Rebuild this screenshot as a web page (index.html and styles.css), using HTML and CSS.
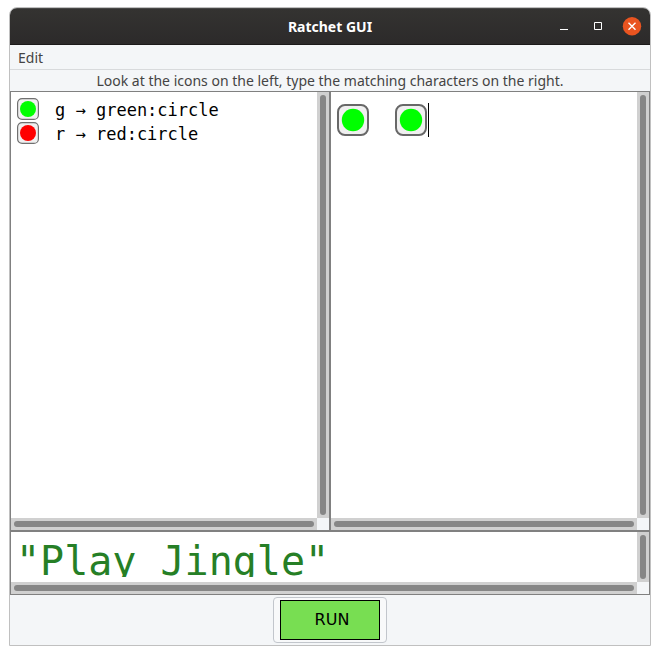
FILE: index.html
```html
<!DOCTYPE html>
<html lang="en">
<head>
<meta charset="utf-8">
<title>Ratchet GUI</title>
<link rel="stylesheet" href="styles.css">
</head>
<body>
<div class="window">
  <header class="titlebar">
    <h1 class="title">Ratchet GUI</h1>
    <div class="controls">
      <button class="control" type="button" aria-label="Minimize"><svg width="20" height="20" viewBox="0 0 20 20"><path d="M6 12h8v1H6z" fill="#fff"/></svg></button>
      <button class="control" type="button" aria-label="Maximize"><svg width="20" height="20" viewBox="0 0 20 20"><path d="M6.5 5.5h7v7h-7z" fill="none" stroke="#fff"/></svg></button>
      <button class="control" type="button" aria-label="Close"><svg width="20" height="20" viewBox="0 0 20 20"><circle cx="10" cy="9.3" r="9.2" fill="#e95420"/><path d="M6.5 5.8l7 7M13.5 5.8l-7 7" stroke="#fff" stroke-width="1.4"/></svg></button>
    </div>
  </header>
  <nav class="menubar"><button class="menu" type="button">Edit</button></nav>
  <p class="hint">Look at the icons on the left, type the matching characters on the right.</p>
  <main class="panes">
    <section class="pane">
      <ul class="legend">
        <li class="entry"><svg class="key" width="22" height="22" viewBox="0 0 22 22"><rect x=".6" y=".6" width="20.8" height="20.8" rx="4.5" fill="#f0f0f0" stroke="#707070" stroke-width="1.2"/><circle cx="11" cy="11" r="8" fill="#0f0"/></svg><span class="meaning">g → green:circle</span></li>
        <li class="entry"><svg class="key" width="22" height="22" viewBox="0 0 22 22"><rect x=".6" y=".6" width="20.8" height="20.8" rx="4.5" fill="#f0f0f0" stroke="#707070" stroke-width="1.2"/><circle cx="11" cy="11" r="8" fill="#f00"/></svg><span class="meaning">r → red:circle</span></li>
      </ul>
      <div class="track vertical"><div class="thumb"></div></div>
      <div class="track horizontal"><div class="thumb"></div></div>
    </section>
    <section class="pane">
      <div class="editor">
        <svg width="32" height="32" viewBox="0 0 32 32"><rect x="1" y="1" width="30" height="30" rx="7" fill="#f0f0f0" stroke="#686868" stroke-width="2"/><circle cx="16" cy="16" r="11.2" fill="#0f0"/></svg>
        <svg width="32" height="32" viewBox="0 0 32 32"><rect x="1" y="1" width="30" height="30" rx="7" fill="#f0f0f0" stroke="#686868" stroke-width="2"/><circle cx="16" cy="16" r="11.2" fill="#0f0"/></svg>
        <span class="caret"></span>
      </div>
      <div class="track vertical"><div class="thumb"></div></div>
      <div class="track horizontal"><div class="thumb"></div></div>
    </section>
  </main>
  <section class="pane output">
    <div class="result"><div class="clip">"Play Jingle"</div></div>
    <div class="track vertical"><div class="thumb"></div></div>
    <div class="track horizontal"><div class="thumb"></div></div>
  </section>
  <footer class="footer">
    <button class="run" type="button"><span class="face">RUN</span></button>
  </footer>
</div>
</body>
</html>
```
FILE: styles.css
```css
* { box-sizing: border-box; }

body {
  margin: 0;
  height: 100vh;
  padding: 7px 9px 9px;
  background: #fff;
  font-family: "Noto Sans", "Open Sans", sans-serif;
  font-size: 14px;
  color: #444;
}

button { font: inherit; color: inherit; }

.window {
  height: 100%;
  display: flex;
  flex-direction: column;
  border: 1px solid #c0c0c0;
  border-radius: 8px 8px 0 0;
  background: #f4f6f8;
  overflow: hidden;
}

.titlebar {
  flex: none;
  height: 37px;
  display: grid;
  grid-template-columns: 1fr auto 1fr;
  align-items: center;
  background: linear-gradient(#343331, #2c2a2a);
  border-top: 1px solid #484846;
  border-bottom: 1px solid #1c1a1a;
}

.title {
  grid-column: 2;
  margin: 0;
  font-size: 14px;
  font-weight: bold;
  color: #fff;
}

.controls {
  justify-self: end;
  display: flex;
  gap: 14px;
  padding-right: 8px;
}

.control {
  padding: 0;
  border: 0;
  background: none;
}

.control svg { display: block; }

.menubar {
  flex: none;
  height: 25px;
  display: flex;
  align-items: center;
  padding-left: 8px;
  border-bottom: 1px solid #d8dadc;
}

.menu {
  padding: 0;
  border: 0;
  background: none;
}

.hint {
  flex: none;
  margin: 0;
  line-height: 21px;
  text-align: center;
  white-space: nowrap;
}

.panes {
  flex: 1;
  min-height: 0;
  display: grid;
  grid-template-columns: 1fr 1fr;
}

.pane {
  min-width: 0;
  display: grid;
  grid-template-columns: 1fr 12px;
  grid-template-rows: 1fr 12px;
  border: 1px solid #808080;
}

.track {
  display: flex;
  padding: 3px;
  background: #d0d0d0;
}

.thumb {
  flex: 1;
  border-radius: 3px;
  background: #868686;
}

.legend {
  margin: 0;
  padding: 5px 6px;
  list-style: none;
  background: #fff;
  color: #000;
  font-family: "DejaVu Sans Mono", monospace;
  font-size: 17px;
}

.entry {
  height: 24px;
  display: flex;
  align-items: center;
  gap: 16px;
}

.meaning {
  padding-top: 2px;
  line-height: 22px;
}

.editor {
  display: flex;
  align-items: flex-start;
  gap: 26px;
  padding: 12px 6px;
  background: #fff;
}

.editor svg { flex: none; }

.caret {
  width: 1px;
  height: 34px;
  margin: -1px 0 0 -25px;
  background: #000;
}

.output {
  flex: none;
  height: 64px;
}

.result {
  min-height: 0;
  padding: 5px;
  background: #fff;
}

.clip {
  height: 40px;
  overflow: hidden;
  color: #267f26;
  font-family: "DejaVu Sans Mono", monospace;
  font-size: 40px;
  line-height: 49px;
  white-space: nowrap;
}

.footer {
  flex: none;
  height: 50px;
  display: flex;
  align-items: center;
  justify-content: center;
}

.run {
  padding: 2px 6px;
  border: 1px solid #c2c6cc;
  border-radius: 4px;
  background: #f8f9fa;
}

.face {
  display: block;
  width: 100px;
  padding-left: 4px;
  border: 1px solid #000;
  background: #78de52;
  color: #000;
  font-family: "DejaVu Sans", sans-serif;
  font-size: 16px;
  line-height: 38px;
}
```
